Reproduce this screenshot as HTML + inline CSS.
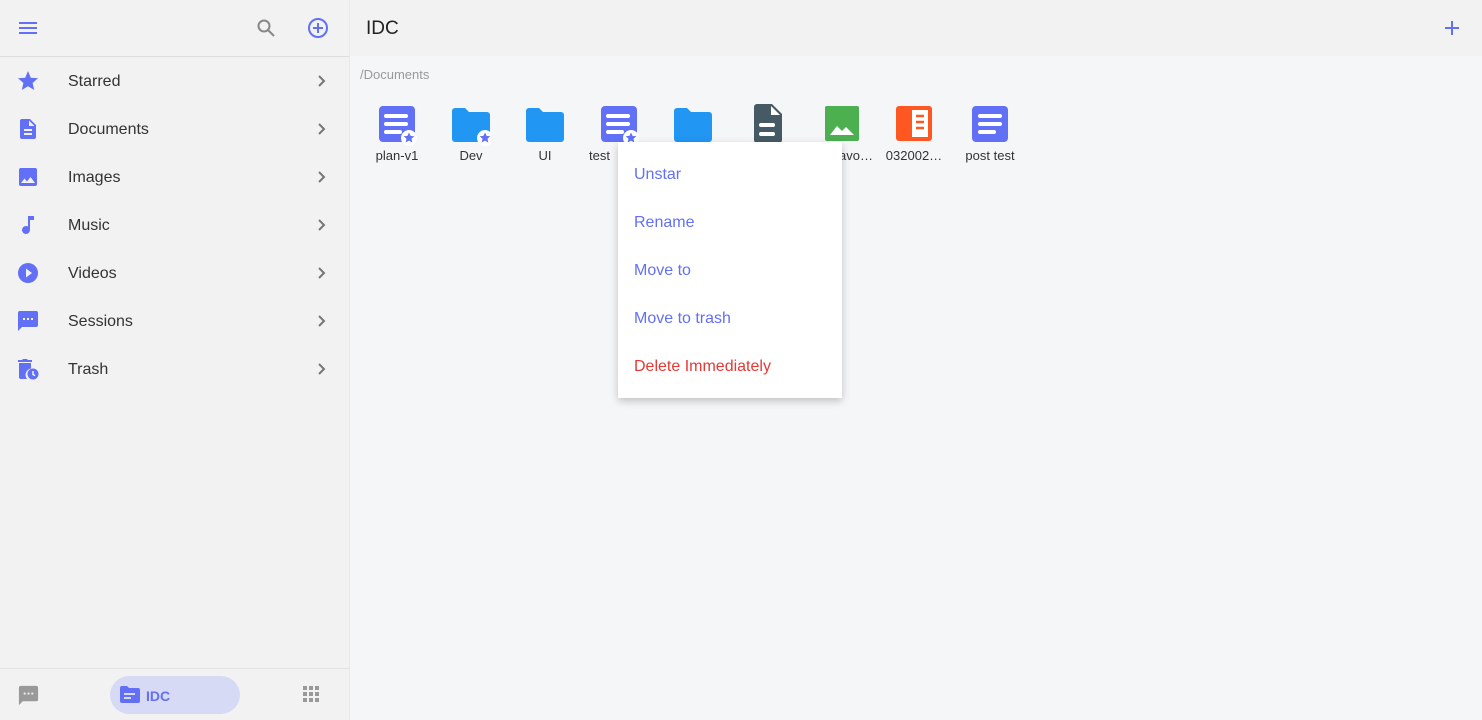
<!DOCTYPE html><html><head><style>
*{margin:0;padding:0;box-sizing:border-box}
body{width:1482px;height:720px;overflow:hidden;font-family:"Liberation Sans",sans-serif;background:#f5f6f8;position:relative;color:#333}
.side{position:absolute;left:0;top:0;width:350px;height:720px;background:#f2f2f2;border-right:1px solid #e8e8e8}
.top{height:57px;border-bottom:1px solid #ddd;position:relative}
.item{position:absolute;left:0;width:350px;height:48px;font-size:16px}
.item .ic{position:absolute;left:16px;top:12px;width:24px;height:24px}
.item .t{position:absolute;left:68px;top:16px;color:#333}
.item .ch{position:absolute;left:314px;top:16px}
.abs{position:absolute}
.mhead{position:absolute;left:350px;top:0;right:0;height:56px;background:#f2f2f2}
.f{position:absolute;top:104px;width:70px;text-align:center}
.f svg{display:block;margin:0 auto}
.f span{display:block;font-size:13px;margin-top:2px;color:#333;white-space:nowrap}
.menu{position:absolute;left:618px;top:142px;width:224px;height:256px;background:#fff;box-shadow:0 3px 8px rgba(0,0,0,.22)}
.menu div{position:absolute;left:16px;font-size:16px;color:#6270f5}
</style></head><body>
<div class="side">
 <div class="top">
  <svg class="abs" style="left:18px;top:20px" width="20" height="16"><path d="M1 3h18M1 8h18M1 13h18" stroke="#6270f5" stroke-width="2"/></svg>
  <svg class="abs" style="left:256px;top:18px" width="20" height="20"><circle cx="8" cy="8" r="5.5" stroke="#888" stroke-width="2" fill="none"/><path d="M12 12l6 6" stroke="#888" stroke-width="2"/></svg>
  <svg class="abs" style="left:307px;top:17px" width="22" height="22"><circle cx="11" cy="11" r="9" stroke="#6270f5" stroke-width="2" fill="none"/><path d="M11 6v10M6 11h10" stroke="#6270f5" stroke-width="2"/></svg>
 </div>
 <div class="item" style="top:57px"><svg class="ic" viewBox="0 0 24 24"><path fill="#6270f5" d="M12 17.3l6.2 3.7-1.6-7 5.4-4.7-7.2-.6L12 2 9.2 8.7 2 9.3l5.4 4.7-1.6 7z"/></svg><span class="t">Starred</span><svg class="ch" width="16" height="16"><path d="M5 3l5 5-5 5" stroke="#777" stroke-width="2" fill="none"/></svg></div>
 <div class="item" style="top:105px"><svg class="ic" viewBox="0 0 24 24"><path fill="#6270f5" d="M14 2H6a2 2 0 0 0-2 2v16a2 2 0 0 0 2 2h12a2 2 0 0 0 2-2V8zm2 16H8v-2h8zm0-4H8v-2h8zm-3-5V3.5L18.5 9z"/></svg><span class="t">Documents</span><svg class="ch" width="16" height="16"><path d="M5 3l5 5-5 5" stroke="#777" stroke-width="2" fill="none"/></svg></div>
 <div class="item" style="top:153px"><svg class="ic" viewBox="0 0 24 24"><path fill="#6270f5" d="M21 19V5a2 2 0 0 0-2-2H5a2 2 0 0 0-2 2v14a2 2 0 0 0 2 2h14a2 2 0 0 0 2-2zM8.5 13.5l2.5 3 3.5-4.5 4.5 6H5z"/></svg><span class="t">Images</span><svg class="ch" width="16" height="16"><path d="M5 3l5 5-5 5" stroke="#777" stroke-width="2" fill="none"/></svg></div>
 <div class="item" style="top:201px"><svg class="ic" viewBox="0 0 24 24"><path fill="#6270f5" d="M12 3v10.5A4 4 0 1 0 14 17V7h4V3z"/></svg><span class="t">Music</span><svg class="ch" width="16" height="16"><path d="M5 3l5 5-5 5" stroke="#777" stroke-width="2" fill="none"/></svg></div>
 <div class="item" style="top:249px"><svg class="ic" viewBox="0 0 24 24"><path fill="#6270f5" d="M12 2a10 10 0 1 0 0 20 10 10 0 0 0 0-20zm-2 14.5v-9l6 4.5z"/></svg><span class="t">Videos</span><svg class="ch" width="16" height="16"><path d="M5 3l5 5-5 5" stroke="#777" stroke-width="2" fill="none"/></svg></div>
 <div class="item" style="top:297px"><svg class="ic" viewBox="0 0 24 24"><path fill="#6270f5" d="M20 2H4a2 2 0 0 0-2 2v18l4-4h14a2 2 0 0 0 2-2V4a2 2 0 0 0-2-2zM9 11H7V9h2zm4 0h-2V9h2zm4 0h-2V9h2z"/></svg><span class="t">Sessions</span><svg class="ch" width="16" height="16"><path d="M5 3l5 5-5 5" stroke="#777" stroke-width="2" fill="none"/></svg></div>
 <div class="item" style="top:345px"><svg class="ic" viewBox="0 0 24 24"><path fill="#6270f5" d="M2 3h4l1-1h4l1 1h4v2H2zM3 6h12v5.5A6.5 6.5 0 0 0 11 22H5a2 2 0 0 1-2-2z"/><circle cx="17" cy="17" r="5.5" fill="#6270f5"/><path d="M17 14v3.5l2 1.2" stroke="#fff" stroke-width="1.4" fill="none"/></svg><span class="t">Trash</span><svg class="ch" width="16" height="16"><path d="M5 3l5 5-5 5" stroke="#777" stroke-width="2" fill="none"/></svg></div>
 <div class="abs" style="left:0;top:668px;width:350px;border-top:1px solid #e2e2e2"></div>
 <svg class="abs" style="left:17px;top:684px" width="23" height="23" viewBox="0 0 24 24"><path fill="#999" d="M20 2H4a2 2 0 0 0-2 2v18l4-4h14a2 2 0 0 0 2-2V4a2 2 0 0 0-2-2zM9 11H7V9h2zm4 0h-2V9h2zm4 0h-2V9h2z"/></svg>
 <div class="abs" style="left:110px;top:676px;width:130px;height:38px;border-radius:19px;background:#d7daf5"></div>
 <svg class="abs" style="left:120px;top:686px" width="20" height="17" viewBox="0 0 20 17"><path fill="#6270f5" d="M0 2a2 2 0 0 1 2-2h5l2 2h9a2 2 0 0 1 2 2v11a2 2 0 0 1-2 2H2a2 2 0 0 1-2-2z"/><path d="M4 8h11M4 12h7" stroke="#d7daf5" stroke-width="2"/></svg>
 <div class="abs" style="left:146px;top:688px;font-size:14px;font-weight:bold;color:#6270f5">IDC</div>
 <svg class="abs" style="left:303px;top:686px" width="17" height="17"><g fill="#999"><rect x="0" y="0" width="4" height="4"/><rect x="6" y="0" width="4" height="4"/><rect x="12" y="0" width="4" height="4"/><rect x="0" y="6" width="4" height="4"/><rect x="6" y="6" width="4" height="4"/><rect x="12" y="6" width="4" height="4"/><rect x="0" y="12" width="4" height="4"/><rect x="6" y="12" width="4" height="4"/><rect x="12" y="12" width="4" height="4"/></g></svg>
</div>
<div class="mhead"><div class="abs" style="left:16px;top:18px;font-size:19px;color:#222">IDC</div>
<svg class="abs" style="left:1094px;top:20px" width="16" height="16"><path d="M8 1v14M1 8h14" stroke="#6270f5" stroke-width="2"/></svg></div>
<div class="abs" style="left:360px;top:67px;font-size:13px;color:#999">/Documents</div>

<div class="f" style="left:362px"><svg width="40" height="42"><rect x="2" y="2" width="36" height="36" rx="4" fill="#6270f5"/><path d="M9 12h20M9 20h20M9 28h14" stroke="#fff" stroke-width="4" stroke-linecap="round"/><circle cx="32" cy="34" r="8" fill="#fff"/><path fill="#6270f5" d="M32 28.5l1.6 3.4 3.7.4-2.8 2.5.8 3.7-3.3-1.9-3.3 1.9.8-3.7-2.8-2.5 3.7-.4z"/></svg><span>plan-v1</span></div>
<div class="f" style="left:436px"><svg width="40" height="42"><path fill="#2196f3" d="M0 7a3 3 0 0 1 3-3h10l4 4h18a3 3 0 0 1 3 3v24a3 3 0 0 1-3 3H3a3 3 0 0 1-3-3z" transform="translate(1 0)"/><circle cx="34" cy="34" r="8" fill="#fff"/><path fill="#6270f5" d="M34 28.5l1.6 3.4 3.7.4-2.8 2.5.8 3.7-3.3-1.9-3.3 1.9.8-3.7-2.8-2.5 3.7-.4z"/></svg><span>Dev</span></div>
<div class="f" style="left:510px"><svg width="40" height="42"><path fill="#2196f3" d="M0 7a3 3 0 0 1 3-3h10l4 4h18a3 3 0 0 1 3 3v24a3 3 0 0 1-3 3H3a3 3 0 0 1-3-3z" transform="translate(1 0)"/></svg><span>UI</span></div>
<div class="f" style="left:584px"><svg width="40" height="42"><rect x="2" y="2" width="36" height="36" rx="4" fill="#6270f5"/><path d="M9 12h20M9 20h20M9 28h14" stroke="#fff" stroke-width="4" stroke-linecap="round"/><circle cx="32" cy="34" r="8" fill="#fff"/><path fill="#6270f5" d="M32 28.5l1.6 3.4 3.7.4-2.8 2.5.8 3.7-3.3-1.9-3.3 1.9.8-3.7-2.8-2.5 3.7-.4z"/></svg><span style="text-align:left;padding-left:5px">test</span></div>
<div class="f" style="left:658px"><svg width="40" height="42"><path fill="#2196f3" d="M0 7a3 3 0 0 1 3-3h10l4 4h18a3 3 0 0 1 3 3v24a3 3 0 0 1-3 3H3a3 3 0 0 1-3-3z" transform="translate(1 0)"/></svg></div>
<div class="f" style="left:733px"><svg width="40" height="42"><path fill="#455a64" d="M8 0h15l10 10v26a3 3 0 0 1-3 3H8a3 3 0 0 1-3-3V3a3 3 0 0 1 3-3z" transform="translate(1 0)"/><path fill="#fff" d="M23 2v9h9z"/><path d="M13 21h12M13 30h12" stroke="#fff" stroke-width="4" stroke-linecap="round"/></svg></div>
<div class="f" style="left:807px"><svg width="40" height="42"><rect x="3" y="2" width="34" height="35" rx="2" fill="#4caf50"/><path fill="#fff" d="M8 31l7-9 5 5 4-4 8 8z"/></svg><span style="text-align:left;padding-left:32px">avo…</span></div>
<div class="f" style="left:879px"><svg width="40" height="42"><rect x="2" y="2" width="36" height="35" rx="3" fill="#ff5722"/><rect x="18" y="6" width="16" height="27" fill="#fff"/><path d="M22 12h8M22 18h8M22 24h8" stroke="#ff5722" stroke-width="2.6"/></svg><span>032002…</span></div>
<div class="f" style="left:955px"><svg width="40" height="42"><rect x="2" y="2" width="36" height="36" rx="4" fill="#6270f5"/><path d="M10 12h20M10 20h20M10 28h14" stroke="#fff" stroke-width="4" stroke-linecap="round"/></svg><span>post test</span></div>

<div class="menu">
 <div style="top:24px">Unstar</div>
 <div style="top:72px">Rename</div>
 <div style="top:120px">Move to</div>
 <div style="top:168px">Move to trash</div>
 <div style="top:216px;color:#e53935">Delete Immediately</div>
</div>
</body></html>
